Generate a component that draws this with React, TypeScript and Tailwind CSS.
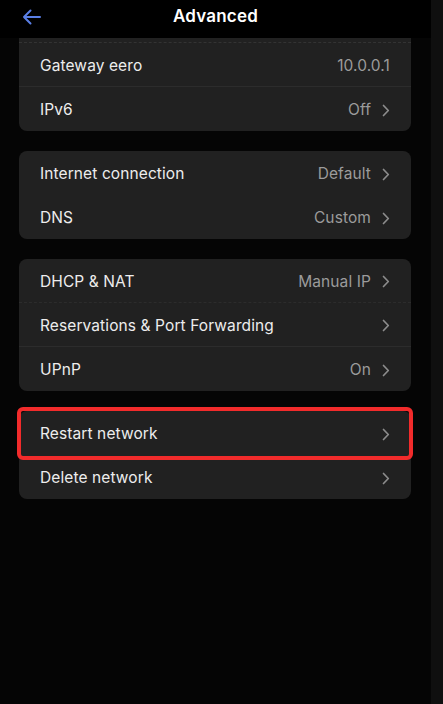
type Row = { label: string; value?: string; chevron?: boolean; dotted?: boolean; highlight?: boolean };

const groups: Row[][] = [
  [
    { label: 'Gateway eero', value: '10.0.0.1', chevron: false },
    { label: 'IPv6', value: 'Off', chevron: true },
  ],
  [
    { label: 'Internet connection', value: 'Default', chevron: true },
    { label: 'DNS', value: 'Custom', chevron: true },
  ],
  [
    { label: 'DHCP & NAT', value: 'Manual IP', chevron: true, dotted: true },
    { label: 'Reservations & Port Forwarding', chevron: true },
    { label: 'UPnP', value: 'On', chevron: true },
  ],
  [
    { label: 'Restart network', chevron: true, highlight: true },
    { label: 'Delete network', chevron: true },
  ],
];

const Chevron = () => (
  <svg width="8" height="13" viewBox="0 0 8 13" fill="none">
    <path d="M1.5 1.5 6.3 6.5l-4.8 5" stroke="#8c8c8c" strokeWidth="1.7" strokeLinecap="round" strokeLinejoin="round" />
  </svg>
);

function SettingRow({ row, divider }: { row: Row; divider: boolean }) {
  return (
    <div className="relative">
      <div
        className={`flex h-[44px] items-center justify-between pl-[21px] pr-[21px] pt-[2px] ${
          divider ? (row.dotted ? 'border-b border-dashed border-[#2c2c2c]' : 'border-b border-[#2c2c2c]') : ''
        }`}
      >
        <span className="text-[15.5px] tracking-[0.1px] text-[#ededed]">{row.label}</span>
        <span className="flex items-center gap-[11px] text-[15.5px] tracking-[0.1px] text-[#9b9b9b]">
          {row.value}
          {row.chevron ? <Chevron /> : null}
        </span>
      </div>
      {row.highlight ? (
        <div className="absolute -left-[2px] -right-[2px] -top-[4px] -bottom-[5px] rounded-[6px] border-4 border-[#f22b2b]" />
      ) : null}
    </div>
  );
}

export default function App() {
  return (
    <div className="flex h-[704px] w-[443px] bg-[#050505] font-['Inter','Noto_Sans',sans-serif]">
      <div className="flex min-w-0 flex-1 flex-col">
        <div className="relative flex h-[38px] shrink-0 items-center justify-center bg-black">
          <svg className="absolute left-[22px] top-[9px]" width="19" height="16" viewBox="0 0 19 16" fill="none">
            <path d="M18 8H2M8.5 1.5 2 8l6.5 6.5" stroke="#5a7fe6" strokeWidth="2" strokeLinecap="round" strokeLinejoin="round" />
          </svg>
          <h1 className="mt-[-4px] text-[17px] font-semibold tracking-[0.2px] text-white">Advanced</h1>
        </div>

        <div className="flex flex-col gap-[20px] pl-[19px] pr-[20px]">
          {groups.map((rows, gi) => (
            <div key={gi} className={`rounded-[8px] bg-[#212121] ${gi === 0 ? 'rounded-t-none' : ''}`}>
              {gi === 0 ? <div className="h-[5px] border-b border-dashed border-[#333]" /> : null}
              {rows.map((r, i) => (
                <SettingRow key={r.label} row={r} divider={i < rows.length - 1 && gi !== 1 && gi !== 3} />
              ))}
            </div>
          ))}
        </div>
      </div>
      <div className="w-[12px] shrink-0 bg-[#0f0f0f]" />
    </div>
  );
}
